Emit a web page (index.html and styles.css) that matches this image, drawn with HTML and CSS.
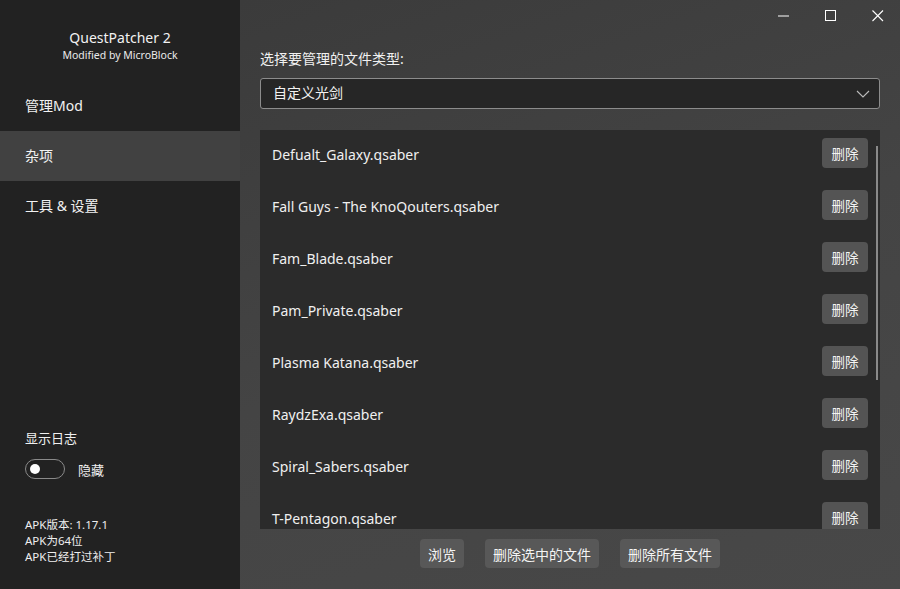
FILE: index.html
```html
<!DOCTYPE html>
<html lang="zh">
<head>
<meta charset="utf-8">
<link rel="stylesheet" href="styles.css">
</head>
<body>
<div class="app">
  <aside class="sidebar">
    <div class="brand">
      <div class="brand-title">QuestPatcher 2</div>
      <div class="brand-sub">Modified by MicroBlock</div>
    </div>
    <nav class="nav">
      <div class="nav-item">管理Mod</div>
      <div class="nav-item active">杂项</div>
      <div class="nav-item">工具 &amp; 设置</div>
    </nav>
    <div class="log">
      <div class="log-title">显示日志</div>
      <div class="toggle-row">
        <span class="toggle"><span class="knob"></span></span>
        <span class="toggle-label">隐藏</span>
      </div>
    </div>
    <div class="apk">
      <div>APK版本: 1.17.1</div>
      <div>APK为64位</div>
      <div>APK已经打过补丁</div>
    </div>
  </aside>
  <main class="main">
    <div class="titlebar">
      <span class="wc"><svg width="12" height="12" viewBox="0 0 12 12"><line x1="0" y1="6" x2="11" y2="6" stroke="#fff" stroke-width="1"/></svg></span>
      <span class="wc"><svg width="12" height="12" viewBox="0 0 12 12"><rect x="0.5" y="0.5" width="10" height="10" fill="none" stroke="#fff" stroke-width="1"/></svg></span>
      <span class="wc"><svg width="12" height="12" viewBox="0 0 12 12"><path d="M0.5 0.5 L11 11 M11 0.5 L0.5 11" stroke="#fff" stroke-width="1.1"/></svg></span>
    </div>
    <div class="content">
      <div class="label">选择要管理的文件类型:</div>
      <div class="select">
        <span>自定义光剑</span>
        <svg class="chev" width="14" height="8" viewBox="0 0 14 8"><path d="M1 1 L7 7 L13 1" fill="none" stroke="#bbb" stroke-width="1.1"/></svg>
      </div>
      <div class="list">
        <div class="rows">
          <div class="row"><span>Defualt_Galaxy.qsaber</span><button class="del">删除</button></div>
          <div class="row"><span>Fall Guys - The KnoQouters.qsaber</span><button class="del">删除</button></div>
          <div class="row"><span>Fam_Blade.qsaber</span><button class="del">删除</button></div>
          <div class="row"><span>Pam_Private.qsaber</span><button class="del">删除</button></div>
          <div class="row"><span>Plasma Katana.qsaber</span><button class="del">删除</button></div>
          <div class="row"><span>RaydzExa.qsaber</span><button class="del">删除</button></div>
          <div class="row"><span>Spiral_Sabers.qsaber</span><button class="del">删除</button></div>
          <div class="row"><span>T-Pentagon.qsaber</span><button class="del">删除</button></div>
        </div>
        <div class="scrollbar"></div>
      </div>
      <div class="actions">
        <button class="btn">浏览</button>
        <button class="btn">删除选中的文件</button>
        <button class="btn">删除所有文件</button>
      </div>
    </div>
  </main>
</div>
</body>
</html>
```
FILE: styles.css
```css
* { box-sizing: border-box; }
html, body { margin: 0; padding: 0; }
body {
  width: 900px;
  height: 589px;
  overflow: hidden;
  font-family: "Noto Sans", "Noto Sans CJK SC", sans-serif;
  color: #f0f0f0;
  background: #222;
}
.app { display: flex; width: 900px; height: 589px; }
.sidebar {
  width: 240px;
  flex: none;
  background: #222222;
  display: flex;
  flex-direction: column;
}
.brand {
  padding-top: 28px;
  height: 81px;
  text-align: center;
}
.brand-title { font-size: 14px; line-height: 20px; color: #f2f2f2; }
.brand-sub { font-size: 10.5px; line-height: 14px; color: #eaeaea; }
.nav-item {
  height: 50px;
  display: flex;
  align-items: center;
  padding-left: 25px;
  padding-bottom: 2px;
  font-size: 14px;
  color: #f2f2f2;
}
.nav-item.active { background: #414141; }
.log { margin-top: 199px; padding-left: 25px; }
.log-title { font-size: 13px; line-height: 16px; color: #f0f0f0; }
.toggle-row { display: flex; align-items: center; margin-top: 13px; gap: 13px; }
.toggle {
  width: 40px;
  height: 20px;
  border: 1px solid #8a8a8a;
  border-radius: 10px;
  display: flex;
  align-items: center;
  padding-left: 4px;
}
.knob { width: 10px; height: 10px; border-radius: 50%; background: #fff; }
.toggle-label { font-size: 13px; color: #f0f0f0; }
.apk {
  margin-top: 38px;
  padding-left: 25px;
  font-size: 11.5px;
  line-height: 16px;
  color: #eeeeee;
}
.main {
  flex: 1;
  background: linear-gradient(160deg, #3b3b3b 0%, #444444 50%, #484848 100%);
  display: flex;
  flex-direction: column;
}
.titlebar {
  height: 32px;
  display: flex;
  justify-content: flex-end;
  align-items: center;
  padding-right: 16px;
  gap: 35px;
}
.wc { width: 12px; height: 12px; display: flex; }
.content { padding: 0 20px 0 20px; display: flex; flex-direction: column; }
.label { font-size: 14px; line-height: 20px; margin-top: 17px; color: #f0f0f0; }
.select {
  margin-top: 9px;
  height: 31px;
  border: 1px solid #8c8c8c;
  border-radius: 3px;
  background: #262626;
  display: flex;
  align-items: center;
  justify-content: space-between;
  padding: 0 9px 4px 12px;
  font-size: 14px;
  color: #f2f2f2;
}
.chev { margin-top: 4px; }
.list {
  margin-top: 21px;
  height: 399px;
  background: #2b2b2b;
  position: relative;
  overflow: hidden;
}
.rows { margin-top: -2px; }
.row {
  height: 52px;
  display: flex;
  align-items: center;
  justify-content: space-between;
  padding: 0 12px 0 12px;
  font-size: 14px;
  color: #f0f0f0;
}
.del {
  width: 46px;
  height: 30px;
  border: none;
  border-radius: 4px;
  background: #545454;
  color: #f4f4f4;
  font-family: inherit;
  font-size: 13.5px;
  padding: 0;
  margin-top: -2px;
}
.scrollbar {
  position: absolute;
  right: 2px;
  top: 16px;
  width: 2px;
  height: 234px;
  background: #8a8a8a;
}
.actions {
  display: flex;
  justify-content: center;
  gap: 21px;
  margin-top: 10px;
}
.btn {
  height: 29px;
  border: none;
  border-radius: 4px;
  background: #585858;
  color: #f4f4f4;
  font-family: inherit;
  font-size: 14px;
  padding: 0 8px;
}
```
